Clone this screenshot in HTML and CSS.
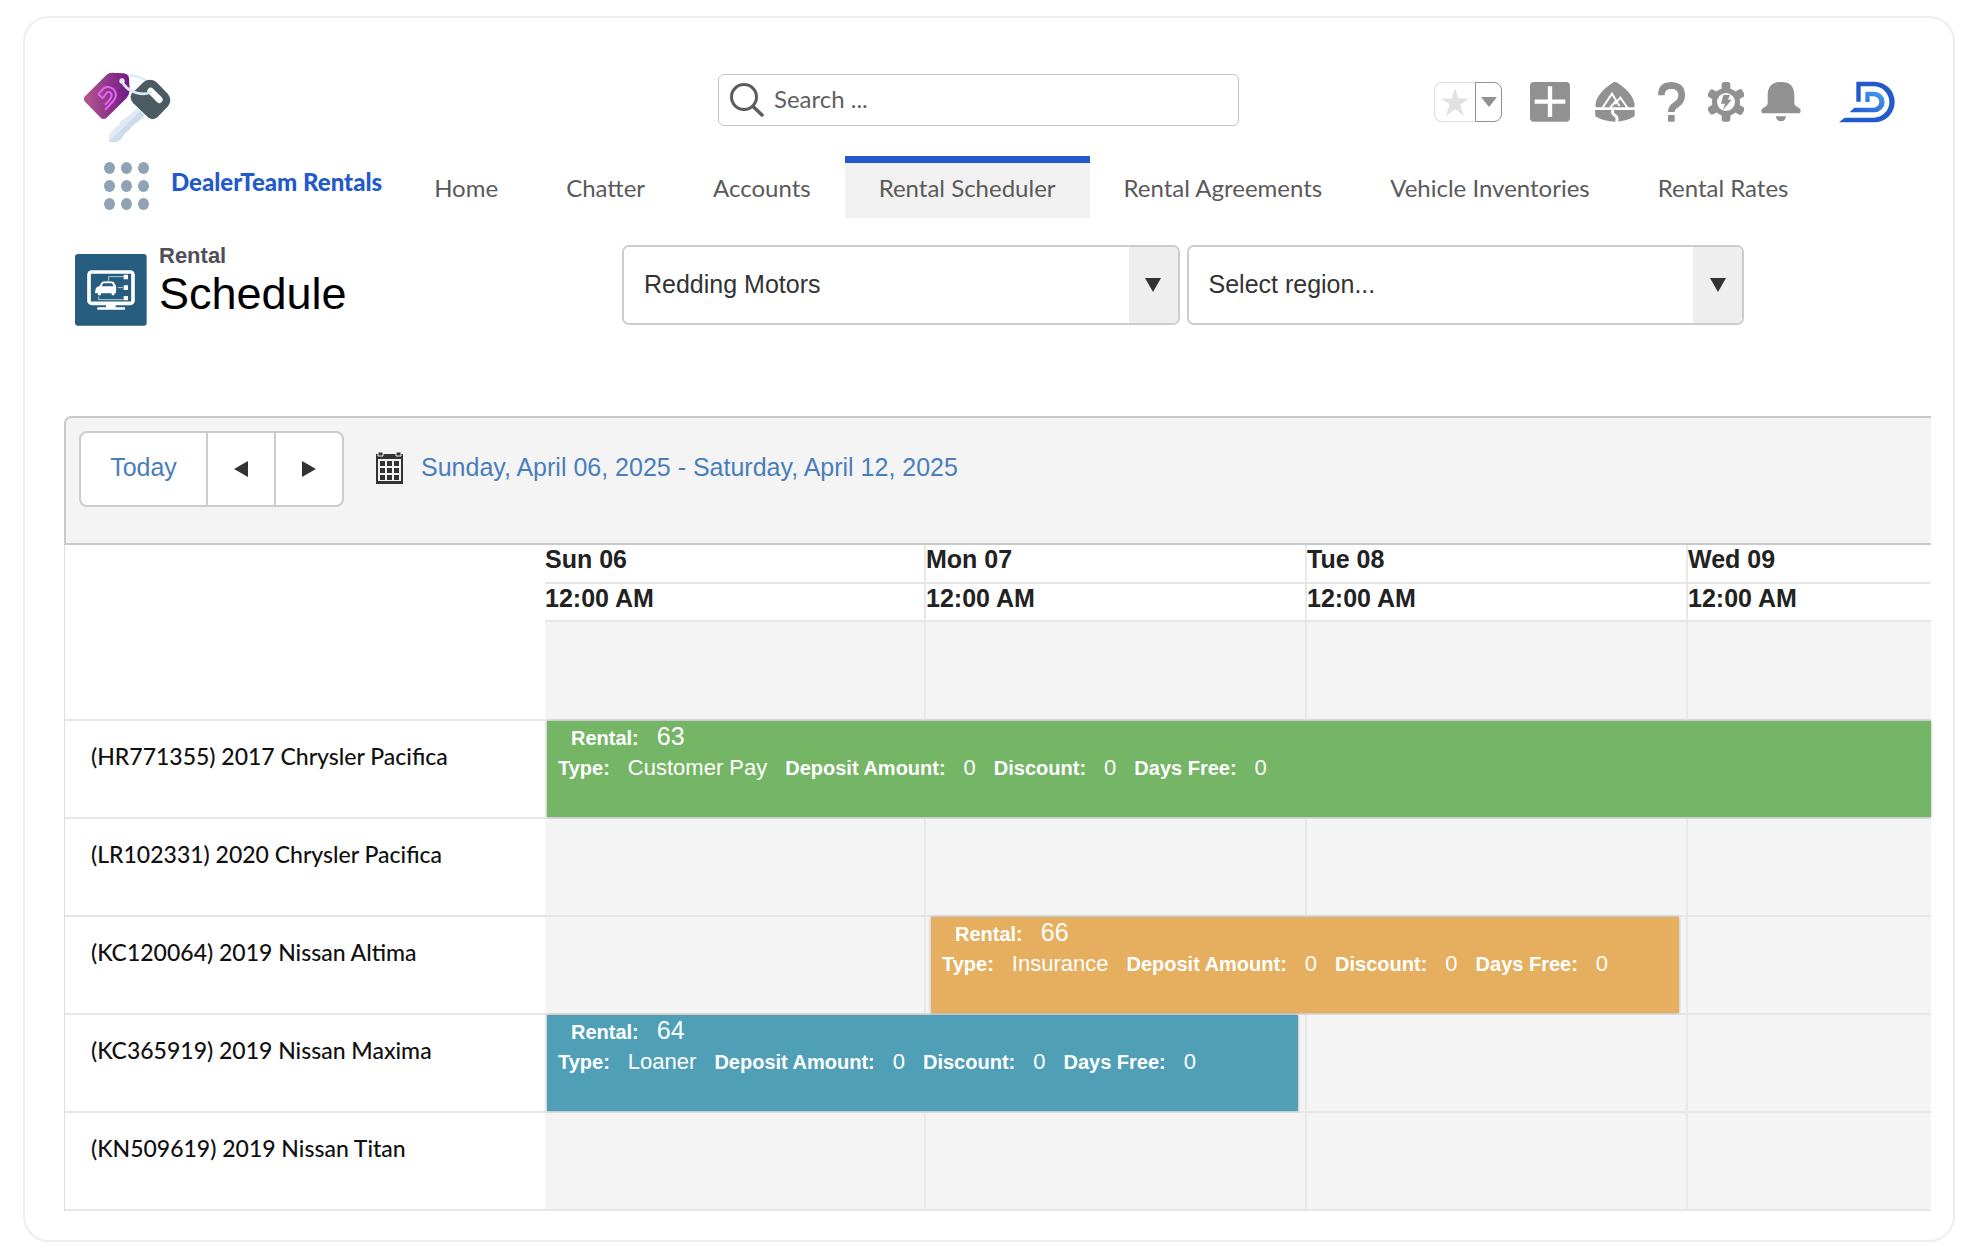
FILE: index.html
```html
<!DOCTYPE html>
<html lang="en">
<head>
  <meta charset="UTF-8">
  <title>Rental Schedule</title>
  <link rel="stylesheet" href="styles.css">
</head>

<body>
  <div class="card">

    <header class="topbar">
      <a href="#" class="logo" aria-label="DealerTeam">
        <svg width="104" height="84" viewBox="0 0 312 252">
          <defs>
            <linearGradient id="tag" x1="0" y1="0" x2="1" y2="0">
              <stop offset="0" stop-color="#b3588c"/>
              <stop offset="1" stop-color="#701a87"/>
            </linearGradient>
          </defs>
          <path d="M190 122 L206 152 L182 170 L170 178 L160 192 L148 200 L136 218 L122 228 L99 228 L99 206 L112 192 L116 184 L128 178 L134 164 L148 156 Z" fill="#deebf6"/>
          <path d="M206 146 L182 170 L170 178 L160 192 L148 200 L136 218 L122 228 L99 228 L190 138 Z" fill="#ccdceb"/>
          <path d="M150 29 C180 26 202 36 216 50" fill="none" stroke="#deebf6" stroke-width="8"/>
          <path d="M92 26 Q98 20 108 20 L142 22 Q157 24 159 36 L161 72 Q161 86 152 96 L92 155 Q83 163 74 155 L27 107 Q20 99 27 91 Z" fill="url(#tag)"/>
          <path d="M203 48 Q222 35 241 48 L276 84 Q290 103 276 121 L244 154 Q230 165 216 154 L172 112 Q158 96 168 82 Z" fill="#4a5b62"/>
          <path d="M224 75 L250 101" stroke="#fff" stroke-width="20" stroke-linecap="round"/>
          <circle cx="138" cy="45" r="8" fill="#e6f1fa"/>
          <path d="M138 46 Q150 72 180 80 Q210 88 224 78" fill="none" stroke="#deebf6" stroke-width="8" stroke-linecap="round"/>
          <path d="M67 84 L84 66 Q100 58 113 70 Q127 86 112 105 L87 132 M81 96 L92 80 Q103 74 107 86 Q108 97 87 116 M67 84 L81 98" fill="none" stroke="#e763f5" stroke-width="6"/>
        </svg>
      </a>
      <label class="search">
        <svg width="36" height="36" viewBox="0 0 36 36" fill="none" stroke="#5c5c5c" stroke-width="3" stroke-linecap="round">
          <circle cx="15" cy="15" r="12.500"/>
          <path d="M24 24.500 L33 33" stroke-width="3.500"/>
        </svg>
        <input type="text" placeholder="Search ..." aria-label="Search">
      </label>
      <div class="actions">
        <div class="favorites">
          <button class="fav-star" aria-label="Favorite">
            <svg width="28" height="28" viewBox="0 0 28 28"><path d="M14 0 L17.300 10.400 H28 L19.400 16.600 L23 28 L14 21.200 L5 28 L8.600 16.600 L0 10.400 H10.700 Z" fill="#e2e2e2"/></svg>
          </button>
          <button class="fav-menu" aria-label="Favorites list">
            <svg width="16" height="10" viewBox="0 0 16 10"><path d="M0 0 H16 L8 10 Z" fill="#919191"/></svg>
          </button>
        </div>
        <button class="icon add" aria-label="Add">
          <svg width="40" height="40" viewBox="0 0 120 120">
            <rect width="120" height="119" rx="12" fill="#919191"/>
            <path d="M60 13 V105 M14 59 H106" stroke="#fff" stroke-width="13"/>
          </svg>
        </button>
        <button class="icon trail" aria-label="Guidance">
          <svg width="40" height="40" viewBox="0 0 120 120">
            <path d="M52 3 Q60 -3 68 3 Q118 36 119 72 Q119 76 114 76 H6 Q1 76 1 72 Q2 36 52 3 Z" fill="#919191"/>
            <path d="M22 78 L51 35 L64 56 M60 66 L76 47 L98 78 M45 78 L62 57 L74 72" fill="none" stroke="#fff" stroke-width="6"/>
            <path d="M0 84 H119 V103 Q92 119 60 119 Q28 119 1 103 Z" fill="#919191"/>
            <path d="M55 84 Q48 93 60 100 Q70 106 64 120" fill="none" stroke="#fff" stroke-width="9"/>
          </svg>
        </button>
        <button class="icon help" aria-label="Help">
          <svg width="27" height="40" viewBox="0 0 81 120">
            <path d="M10 40 Q10 10 41 10 Q71 12 71 40 Q71 57 56 67 Q40 76 40 90" fill="none" stroke="#919191" stroke-width="20"/>
            <rect x="30" y="99" width="20" height="20" rx="3" fill="#919191"/>
          </svg>
        </button>
        <button class="icon setup" aria-label="Setup">
          <svg width="36" height="40" viewBox="0 0 108 120">
            <g fill="#919191">
              <circle cx="54" cy="60" r="42"/>
              <rect x="41" y="0" width="26" height="119" rx="8"/>
              <rect x="41" y="0" width="26" height="119" rx="8" transform="rotate(60 54 60)"/>
              <rect x="41" y="0" width="26" height="119" rx="8" transform="rotate(120 54 60)"/>
            </g>
            <circle cx="54" cy="60" r="27" fill="#fff"/>
            <path d="M46 39 H66 L60 53 H71 L45 84 L51 65 H39 Z" fill="#919191"/>
          </svg>
        </button>
        <button class="icon bell" aria-label="Notifications">
          <svg width="40" height="40" viewBox="0 0 120 120" fill="#919191">
            <path d="M20 40 Q20 0 60 0 Q100 0 100 40 V64 Q101 73 113 77 Q119 80 119 86 Q119 94 112 94 H8 Q1 94 1 86 Q1 80 8 77 Q19 73 20 64 Z"/>
            <path d="M45 103 H75 Q74 118 60 118 Q46 118 45 103 Z"/>
          </svg>
        </button>
        <a href="#" class="brand" aria-label="Profile">
          <svg width="56" height="42" viewBox="0 0 168 126">
            <defs>
              <linearGradient id="inner" x1="0" y1="1" x2="1" y2="0">
                <stop offset="0" stop-color="#1f57cb"/>
                <stop offset="1" stop-color="#4a9df0"/>
              </linearGradient>
            </defs>
            <path d="M52 2 H106 A61 61 0 0 1 106 124 H0 L17 110 H104 A47 47 0 0 0 104 16 H65 V62 H52 Z" fill="#2259cc"/>
            <path d="M79 32 H106 A31 31 0 0 1 106 94 H32 L46 80 H104 A17 17 0 0 0 104 46 H92 V63 H79 Z" fill="url(#inner)"/>
          </svg>
        </a>
      </div>
    </header>

    <nav class="nav">
      <button class="launcher" aria-label="App launcher">
        <i></i><i></i><i></i>
        <i></i><i></i><i></i>
        <i></i><i></i><i></i>
      </button>
      <span class="app-name">DealerTeam Rentals</span>
      <a href="#" class="tab">Home</a>
      <a href="#" class="tab">Chatter</a>
      <a href="#" class="tab">Accounts</a>
      <a href="#" class="tab active">Rental Scheduler</a>
      <a href="#" class="tab">Rental Agreements</a>
      <a href="#" class="tab">Vehicle Inventories</a>
      <a href="#" class="tab">Rental Rates</a>
    </nav>

    <div class="page-head">
      <svg class="page-icon" width="72" height="72" viewBox="0 0 216 216">
        <rect width="215" height="215" rx="9" fill="#265c7e"/>
        <rect x="42" y="54" width="132" height="94" rx="8" fill="none" stroke="#fff" stroke-width="11"/>
        <path d="M93 152 H122 V160 H150 V167 H67 V160 H93 Z" fill="#fff"/>
        <path d="M62 104 Q64 98 73 97 L80 85 Q84 82 98 82 Q114 82 117 85 L123 97 Q124 103 123 118 H118 V124 H110 V118 H78 V124 H69 V118 H60 Z" fill="#fff"/>
        <path d="M80 97 L85 88 H111 L116 97 Z" fill="#265c7e"/>
        <g stroke="#bcd0dc" stroke-width="3" fill="none">
          <path d="M101 80 V68 H146 M128 101 H144 M71 128 V137 H146"/>
        </g>
        <path d="M146 62 h13 v14 h-13 Z M146 94 h13 v14 h-13 Z M146 126 h13 v13 h-13 Z" fill="#fff"/>
      </svg>
      <div class="page-title">
        <p>Rental</p>
        <h1>Schedule</h1>
      </div>
      <div class="filters">
        <div class="picker">
          <select aria-label="Location"><option>Redding Motors</option></select>
          <span class="arrow"><svg width="16" height="14" viewBox="0 0 16 14"><path d="M0 0 H16 L8 14 Z" fill="#333"/></svg></span>
        </div>
        <div class="picker">
          <select aria-label="Region"><option>Select region...</option></select>
          <span class="arrow"><svg width="16" height="14" viewBox="0 0 16 14"><path d="M0 0 H16 L8 14 Z" fill="#333"/></svg></span>
        </div>
      </div>
    </div>

    <div class="scheduler">
      <div class="toolbar">
        <div class="btn-group">
          <button class="today">Today</button>
          <button aria-label="Previous"><svg width="14" height="16" viewBox="0 0 14 16"><path d="M14 0 V16 L0 8 Z" fill="#333"/></svg></button>
          <button aria-label="Next"><svg width="14" height="16" viewBox="0 0 14 16"><path d="M0 0 V16 L14 8 Z" fill="#333"/></svg></button>
        </div>
        <a href="#" class="range">
          <svg width="27" height="32" viewBox="0 0 27 32">
            <path d="M0 2 H27 V32 H0 Z" fill="#333"/>
            <path d="M2 7 H25 V29 H2 Z" fill="#f4f4f4"/>
            <path d="M2 0 h5 v4 h-5 Z M20 0 h5 v4 h-5 Z" fill="#333" stroke="#f4f4f4"/>
            <path d="M4 11.500 H23 M4 18.500 H23 M4 25.500 H23" stroke="#333" stroke-width="5" stroke-dasharray="5 2"/>
          </svg>
          Sunday, April 06, 2025 - Saturday, April 12, 2025
        </a>
      </div>

      <table class="timeline">
        <colgroup>
          <col class="col-unit"><col class="col-day"><col class="col-day"><col class="col-day"><col>
        </colgroup>
        <thead>
          <tr class="days">
            <td rowspan="3" class="corner"></td>
            <th>Sun 06</th><th>Mon 07</th><th>Tue 08</th><th>Wed 09</th>
          </tr>
          <tr class="hours">
            <th>12:00 AM</th><th>12:00 AM</th><th>12:00 AM</th><th>12:00 AM</th>
          </tr>
          <tr class="spacer"><td></td><td></td><td></td><td></td></tr>
        </thead>
        <tbody>
          <tr>
            <th>(HR771355) 2017 Chrysler Pacifica</th>
            <td colspan="4">
              <div class="event green">
                <p class="number"><b>Rental:</b><span>63</span></p>
                <p><b>Type:</b><span>Customer Pay</span><b>Deposit Amount:</b><span>0</span><b>Discount:</b><span>0</span><b>Days Free:</b><span>0</span></p>
              </div>
            </td>
          </tr>
          <tr>
            <th>(LR102331) 2020 Chrysler Pacifica</th>
            <td></td><td></td><td></td><td></td>
          </tr>
          <tr>
            <th>(KC120064) 2019 Nissan Altima</th>
            <td></td>
            <td colspan="2">
              <div class="event orange">
                <p class="number"><b>Rental:</b><span>66</span></p>
                <p><b>Type:</b><span>Insurance</span><b>Deposit Amount:</b><span>0</span><b>Discount:</b><span>0</span><b>Days Free:</b><span>0</span></p>
              </div>
            </td>
            <td></td>
          </tr>
          <tr>
            <th>(KC365919) 2019 Nissan Maxima</th>
            <td colspan="2">
              <div class="event blue">
                <p class="number"><b>Rental:</b><span>64</span></p>
                <p><b>Type:</b><span>Loaner</span><b>Deposit Amount:</b><span>0</span><b>Discount:</b><span>0</span><b>Days Free:</b><span>0</span></p>
              </div>
            </td>
            <td></td><td></td>
          </tr>
          <tr>
            <th>(KN509619) 2019 Nissan Titan</th>
            <td></td><td></td><td></td><td></td>
          </tr>
        </tbody>
      </table>
    </div>

  </div>
</body>
</html>
```
FILE: styles.css
```css
* { box-sizing: border-box; }

body {
  margin: 0;
  background: #fff;
  font-family: Lato, "Liberation Sans", sans-serif;
  font-size: 24px;
  color: #5a5a5a;
}
a { text-decoration: none; color: inherit; }
p, h1 { margin: 0; }
svg { display: block; flex: none; }
button {
  padding: 0;
  border: 0;
  background: none;
  font: inherit;
  color: inherit;
}

.card {
  margin: 16px 19px 8px 23px;
  padding: 48px 0 29px;
  border: 2px solid #eee;
  border-radius: 26px;
}

/***********
 * top bar *
 ***********/
.topbar {
  display: flex;
  align-items: flex-start;
  height: 90px;
  padding: 0 58px 0 51px;
}
.logo { flex: 0 1 642px; }
.search {
  display: flex;
  align-items: center;
  gap: 9px;
  flex: 0 1 521px;
  height: 52px;
  margin-top: 8px;
  padding: 0 10px;
  border: 1px solid #c4c4c4;
  border-radius: 6px;
}
.search input {
  flex: 1;
  min-width: 0;
  padding: 0 0 3px;
  border: 0;
  outline: 0;
  background: none;
  font: inherit;
  color: inherit;
}
.search input::placeholder { color: #5f5f5f; opacity: 1; }

.actions {
  display: flex;
  align-items: center;
  height: 71px;
  margin-left: auto;
}
.favorites { display: flex; height: 40px; margin-right: 28px; }
.favorites button { display: grid; place-items: center; border: 1px solid #dedede; }
.favorites .fav-star { width: 41px; border-right: 0; border-radius: 8px 0 0 8px; }
.favorites .fav-menu { width: 27px; border-color: #919191; border-radius: 0 8px 8px 0; }
.add   { margin-right: 25px; }
.trail { margin-right: 23px; }
.help  { margin-right: 23px; }
.setup { margin-right: 17px; }
.bell  { margin-right: 38px; }

/**************
 * navigation *
 **************/
.nav { display: flex; height: 62px; padding-left: 79px; }
.launcher {
  display: grid;
  grid-template-columns: repeat(3, 11px);
  gap: 6px;
  align-self: center;
  margin: 0 22px 3px 0;
}
.launcher i { height: 12px; border-radius: 50%; background: #8ea3b5; }
.app-name {
  margin-right: 18px;
  color: #225acb;
  font-weight: 900;
  line-height: 52px;
}
.tab {
  padding: 0 34px;
  border-top: 7px solid transparent;
  line-height: 50px;
  white-space: nowrap;
}
.tab.active { border-color: #225acb; background: #f1f1f1; }

/***************
 * page header *
 ***************/
.page-head {
  display: flex;
  align-items: flex-start;
  padding: 27px 209px 0 50px;
  font-family: "Liberation Sans", Arial, sans-serif;
}
.page-icon { margin-top: 9px; }
.page-title { width: 475px; padding-left: 12px; }
.page-title p { font-size: 22px; line-height: 22px; font-weight: bold; color: #4f4f59; }
.page-title h1 { font-size: 45px; line-height: 54px; font-weight: normal; color: #000; }

.filters { display: flex; flex: 1; gap: 7px; }
.picker {
  display: grid;
  grid-template-columns: 1fr 49px;
  flex: 1;
  height: 80px;
  border: 2px solid #ccc;
  border-radius: 7px;
  overflow: hidden;
}
/* select covers the whole picker, the arrow box sits on its right end */
.picker select {
  grid-area: 1 / 1 / 2 / 3;
  padding: 0 20px 2px;
  border: 0;
  background: #fff;
  appearance: none;
  font: inherit;
  font-size: 25px;
  color: #333;
}
.picker .arrow {
  grid-area: 1 / 2;
  display: grid;
  place-items: center;
  background: #eee;
  pointer-events: none;
}

/*************
 * scheduler *
 *************/
.scheduler {
  margin: 90px 22px 0 39px;
  font-family: "Liberation Sans", Arial, sans-serif;
  font-size: 25px;
}
.toolbar {
  display: flex;
  align-items: flex-start;
  height: 129px;
  padding: 13px;
  border: 2px solid #c9c9c9;
  border-right: 0;
  border-top-left-radius: 7px;
  background: #f4f4f4;
  color: #4a7ebb;
}
.btn-group {
  display: flex;
  height: 76px;
  border: 2px solid #ccc;
  border-radius: 8px;
  background: #fff;
  overflow: hidden;
}
.btn-group button { display: grid; place-items: center; width: 68px; border-left: 2px solid #ccc; }
.btn-group .today { width: 125px; padding-bottom: 3px; border-left: 0; }
.range { display: flex; align-items: center; gap: 18px; height: 73px; margin-left: 32px; }

.timeline {
  width: 100%;
  table-layout: fixed;
  border-collapse: separate;
  border-spacing: 0;
  border-left: 1px solid #ddd;
}
.col-unit { width: 480px; }
.col-day  { width: 381px; }
.timeline th, .timeline td {
  height: 98px;
  padding: 0;
  border-bottom: 2px solid #e6e6e6;
  text-align: left;
  vertical-align: top;
}
.timeline td { border-right: 2px solid #e8e8e8; background: #f4f4f4; }
.timeline td:last-child, .timeline thead th:last-child { border-right: 0; }
.timeline thead .corner { height: 176px; border-right: 0; background: #fff; }
.timeline thead th { border-right: 2px solid #e8e8e8; color: #222; line-height: 29px; }
.timeline .days th   { height: 39px; }
.timeline .hours th  { height: 38px; }
.timeline .spacer td { height: 99px; }

.timeline tbody th {
  padding: 19px 0 0 26px;
  font-family: Lato, sans-serif;
  font-size: 23px;
  font-weight: 500;
  line-height: 32px;
  color: #111;
}

.event {
  height: 96px;
  margin: 0 7px 0 2px;
  padding: 0 11px;
  box-shadow: 0 0 3px rgba(0, 0, 0, .3);
  color: #fff;
  font-size: 22px;
  white-space: nowrap;
}
.event p { display: flex; align-items: baseline; gap: 18px; line-height: 30px; }
.event b { font-size: 20px; }
.event .number { padding-left: 13px; }
.event .number span { font-size: 25px; }
.green  { margin-right: 0; background: #75b566; }
.orange { margin-left: 5px; background: #e5af5f; }
.blue   { background: #4f9fb6; }
```
